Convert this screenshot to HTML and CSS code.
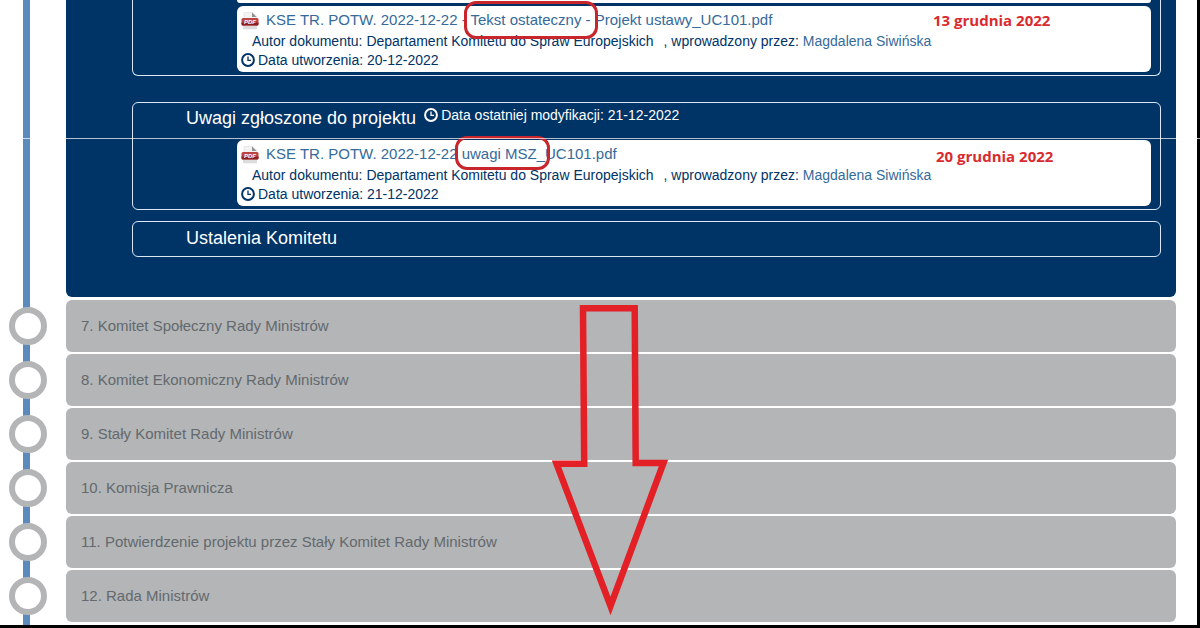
FILE: index.html
```html
<!DOCTYPE html>
<html lang="pl">
<head>
  <meta charset="UTF-8">
  <meta name="viewport" content="width=device-width, initial-scale=1">
  <title>Projekt ustawy UC101</title>
  <link rel="stylesheet" href="styles.css">
</head>
<body>

  <!-- shared icons -->
  <svg class="sprite" aria-hidden="true">
    <symbol id="clock" viewBox="0 0 14 14">
      <circle cx="7" cy="7" r="5.9" fill="none" stroke="currentColor" stroke-width="2"/>
      <path d="M7 3.4V7.4H10" fill="none" stroke="currentColor" stroke-width="1.3"/>
    </symbol>
    <symbol id="pdf" viewBox="0 0 18 18">
      <path d="M3 .5H12L15.500 4V17H3Z" fill="#f3f3f3" stroke="#dcdcdc" stroke-width=".6"/>
      <path d="M11 .5L15.500 5H11Z" fill="#8f8f8f"/>
      <path d="M2 14H16V17H2Z" fill="#dcdcdc"/>
      <rect x=".5" y="6" width="17" height="7.500" rx="1.500" fill="#bb4542"/>
      <path d="M.5 10.500H17.500V12a1.500 1.500 0 0 1-1.500 1.500H2A1.500 1.500 0 0 1 .5 12Z" fill="#8c1f20"/>
    </symbol>
  </svg>

  <main class="timeline">

    <section class="panel">
      <div class="group group-cut">
        <div class="card card-cut"></div>
        <article class="card">
          <div class="file">
            <svg class="icon-pdf" viewBox="0 0 18 18"><use href="#pdf"/><text x="9" y="12" text-anchor="middle">PDF</text></svg>
            <a href="#">KSE TR. POTW. 2022-12-22 - Tekst ostateczny - Projekt ustawy_UC101.pdf</a>
          </div>
          <div class="author">
            <span>Autor dokumentu: Departament Komitetu do Spraw Europejskich</span>
            <span>, wprowadzony przez: <a href="#">Magdalena Siwińska</a></span>
          </div>
          <div class="created"><svg class="icon-clock"><use href="#clock"/></svg>Data utworzenia: 20-12-2022</div>
          <strong class="note note-first">13 grudnia 2022</strong>
          <span class="ring ring-first"></span>
        </article>
      </div>

      <div class="group">
        <header class="group-head">
          <h2>Uwagi zgłoszone do projektu</h2>
          <span class="modified"><svg class="icon-clock"><use href="#clock"/></svg>Data ostatniej modyfikacji: 21-12-2022</span>
        </header>
        <article class="card">
          <div class="file">
            <svg class="icon-pdf" viewBox="0 0 18 18"><use href="#pdf"/><text x="9" y="12" text-anchor="middle">PDF</text></svg>
            <a href="#">KSE TR. POTW. 2022-12-22 uwagi MSZ_UC101.pdf</a>
          </div>
          <div class="author">
            <span>Autor dokumentu: Departament Komitetu do Spraw Europejskich</span>
            <span>, wprowadzony przez: <a href="#">Magdalena Siwińska</a></span>
          </div>
          <div class="created"><svg class="icon-clock"><use href="#clock"/></svg>Data utworzenia: 21-12-2022</div>
          <strong class="note note-second">20 grudnia 2022</strong>
          <span class="ring ring-second"></span>
        </article>
      </div>

      <div class="group group-empty">
        <h2>Ustalenia Komitetu</h2>
      </div>
    </section>

    <ul class="steps">
      <li><span class="dot"></span><div class="step">7. Komitet Społeczny Rady Ministrów</div></li>
      <li><span class="dot"></span><div class="step">8. Komitet Ekonomiczny Rady Ministrów</div></li>
      <li><span class="dot"></span><div class="step">9. Stały Komitet Rady Ministrów</div></li>
      <li><span class="dot"></span><div class="step">10. Komisja Prawnicza</div></li>
      <li><span class="dot"></span><div class="step">11. Potwierdzenie projektu przez Stały Komitet Rady Ministrów</div></li>
      <li><span class="dot"></span><div class="step">12. Rada Ministrów</div></li>
    </ul>

    <svg class="arrow" viewBox="0 0 120 314" aria-hidden="true">
      <path d="M33 8.300H84.700L85.700 163H113.500L60.500 306L6.500 163.700H34.200Z"/>
    </svg>
    <div class="seam"></div>
  </main>

</body>
</html>
```
FILE: styles.css
```css
* {
  box-sizing: border-box;
}

body {
  margin: 0;
  background: #fff;
  color: #003366;
  font-family: "Liberation Sans", Arial, sans-serif;
  font-size: 14px;
}

a {
  color: #356a9a;
  text-decoration: none;
}

a:hover {
  text-decoration: underline;
}

h2 {
  margin: 0;
  font-size: 18px;
  font-weight: 400;
  line-height: 20px;
}

.sprite {
  position: absolute;
  width: 0;
  height: 0;
}

.timeline {
  position: relative;
  padding-bottom: 3px;
  border-right: 3px solid #000;
  border-bottom: 3px solid #000;
}

/* vertical line behind the dots */
.timeline::before {
  content: "";
  position: absolute;
  top: 0;
  bottom: 0;
  left: 23px;
  width: 7px;
  background: #5b8bbd;
}

.panel {
  margin: 0 21px 0 66px;
  padding: 0 15px 40px 66px;
  background: #003366;
  border-radius: 0 0 6px 6px;
}

.group {
  margin-bottom: 11px;
  padding: 0 9px 3px 104px;
  border: 1px solid #dbe8f4;
  border-radius: 6px;
}

.group-cut {
  margin-bottom: 26px;
  border-top: 0;
  border-radius: 0 0 6px 6px;
}

.group-head {
  display: flex;
  gap: 8px;
  height: 37px;
  margin-left: -51px;
  padding-top: 4px;
  color: #fff;
}

.modified {
  line-height: 16px;
}

.group-empty {
  margin-bottom: 0;
  padding: 6px 9px 8px 53px;
  color: #fff;
}

.group-head h2 {
  line-height: 22px;
}

.card {
  position: relative;
  padding: 3px 4px;
  background: #fff;
  border-radius: 6px;
}

.card-cut {
  height: 3px;
  margin-bottom: 3px;
  padding: 0;
  border-radius: 0 0 6px 6px;
}

.file {
  display: flex;
  gap: 7px;
  font-size: 15px;
  line-height: 22px;
}

.author {
  display: flex;
  gap: 10px;
  padding-left: 11px;
  line-height: 20px;
}

.created {
  line-height: 18px;
}

.icon-pdf {
  width: 18px;
  height: 18px;
  margin-top: 3px;
}

.icon-pdf text {
  fill: #fff;
  font: italic bold 6px "Liberation Sans", sans-serif;
}

.icon-clock {
  width: 14px;
  height: 14px;
  margin-right: 3px;
  vertical-align: -2px;
}

/* red marks over the documents */
.note {
  position: absolute;
  top: 4px;
  color: #d92b2f;
  font-family: "Open Sans", "Noto Sans", sans-serif;
  font-size: 15px;
  line-height: 20px;
}

.note-first {
  left: 696px;
}

.note-second {
  top: 6px;
  left: 699px;
}

.ring {
  position: absolute;
  border: 3px solid #c9252d;
  border-radius: 12px;
}

.ring-first {
  top: -5px;
  left: 227px;
  width: 134px;
  height: 38px;
}

.ring-second {
  top: -4px;
  left: 218px;
  width: 95px;
  height: 34px;
}

.steps {
  position: relative;
  display: grid;
  gap: 2px;
  margin: 3px 21px 0 0;
  padding: 0;
  list-style: none;
}

.steps li {
  display: flex;
  align-items: center;
}

.dot {
  width: 38px;
  height: 38px;
  margin: 0 19px 0 9px;
  background: #fff;
  border: 6px solid #b3b5b7;
  border-radius: 50%;
}

.step {
  flex: 1;
  padding: 16px 15px;
  background: #b3b5b7;
  border-radius: 6px;
  color: #63696d;
  font-size: 15px;
  line-height: 20px;
}

.arrow {
  position: absolute;
  top: 300px;
  left: 550px;
  width: 120px;
  height: 314px;
  overflow: visible;
}

.arrow path {
  fill: none;
  stroke: #e32026;
  stroke-width: 6.5;
  stroke-miterlimit: 8;
}

.seam {
  position: absolute;
  top: 138px;
  left: 0;
  right: -3px;
  height: 1px;
  background: #fff;
  opacity: 0.7;
}
```
